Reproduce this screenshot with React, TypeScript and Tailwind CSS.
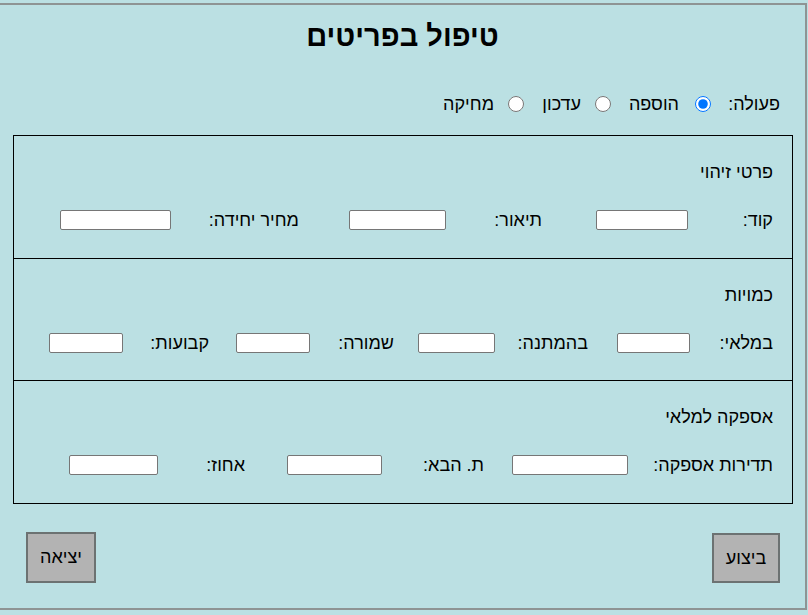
import React from "react";

type F = { label: string; labelCls: string; inputCls: string; gapCls: string };

function Field({ label, labelCls, inputCls, gapCls }: F) {
  return (
    <div className={"flex items-center " + gapCls}>
      <div className={"text-right whitespace-nowrap leading-[20px] " + labelCls}>{label}</div>
      <input
        type="text"
        className={"h-[20px] bg-white border border-[#767676] rounded-[2px] outline-none " + inputCls}
      />
    </div>
  );
}

function Section({ title, fields, cls }: { title: string; fields: F[]; cls: string }) {
  return (
    <div className={cls}>
      <div className="pt-[27px] pr-[19px] leading-[18px]">{title}</div>
      <div className="flex items-center pr-[19px] mt-[29px] h-[20px]">
        {fields.map((f, i) => (
          <Field key={i} {...f} />
        ))}
      </div>
    </div>
  );
}

export default function App() {
  return (
    <div
      dir="rtl"
      className="w-[808px] h-[615px] bg-[#bbe0e3] overflow-hidden text-[18px] text-black font-['Liberation_Sans',Arial,sans-serif]"
    >
      <div className="mt-[3px] mr-[1px] ml-[-2px] w-[809px] h-[607px] border-2 border-[#8e9494] flex flex-col">
        <h1 className="pt-[15px] text-center text-[29px] font-bold leading-[32px]">טיפול בפריטים</h1>
        <div className="flex items-center mt-[42px] pr-[25px] h-[20px] leading-[20px]">
          <div className="w-[69px] text-right">פעולה:</div>
          <input type="radio" name="op" defaultChecked className="w-[16px] h-[16px] m-0" />
          <div className="w-[84px] pr-[16px] text-right">הוספה</div>
          <input type="radio" name="op" className="w-[16px] h-[16px] m-0" />
          <div className="w-[71px] pr-[14px] text-right">עדכון</div>
          <input type="radio" name="op" className="w-[16px] h-[16px] m-0" />
          <div className="pr-[14px] text-right">מחיקה</div>
        </div>
        <div className="mt-[21px] mr-[12px] w-[780px] h-[369px] border border-black">
          <Section
            title="פרטי זיהוי"
            cls="h-[123px] border-b border-black"
            fields={[
              { label: "קוד:", labelCls: "w-[85px]", inputCls: "w-[92px]", gapCls: "" },
              { label: "תיאור:", labelCls: "w-[96px]", inputCls: "w-[97px]", gapCls: "mr-[54px]" },
              { label: "מחיר יחידה:", labelCls: "w-[128px]", inputCls: "w-[111px]", gapCls: "mr-[50px]" },
            ]}
          />
          <Section
            title="כמויות"
            cls="h-[122px] border-b border-black"
            fields={[
              { label: "במלאי:", labelCls: "w-[83px]", inputCls: "w-[73px]", gapCls: "" },
              { label: "בהמתנה:", labelCls: "w-[93px]", inputCls: "w-[77px]", gapCls: "mr-[29px]" },
              { label: "שמורה:", labelCls: "w-[84px]", inputCls: "w-[74px]", gapCls: "mr-[24px]" },
              { label: "קבועות:", labelCls: "w-[86px]", inputCls: "w-[74px]", gapCls: "mr-[27px]" },
            ]}
          />
          <Section
            title="אספקה למלאי"
            cls="h-[122px]"
            fields={[
              { label: "תדירות אספקה:", labelCls: "w-[145px]", inputCls: "w-[116px]", gapCls: "" },
              { label: "ת. הבא:", labelCls: "w-[102px]", inputCls: "w-[95px]", gapCls: "mr-[28px]" },
              { label: "אחוז:", labelCls: "w-[87px]", inputCls: "w-[89px]", gapCls: "mr-[42px]" },
            ]}
          />
        </div>
        <div className="flex justify-between items-start mt-[28px] pr-[25px] pl-[26px]">
          <button className="w-[68px] h-[50px] mt-[1px] bg-[#b3b3b3] border-2 border-[#6c7272] text-[18px]">ביצוע</button>
          <button className="w-[70px] h-[51px] bg-[#b3b3b3] border-2 border-[#6c7272] text-[18px]">יציאה</button>
        </div>
      </div>
    </div>
  );
}
